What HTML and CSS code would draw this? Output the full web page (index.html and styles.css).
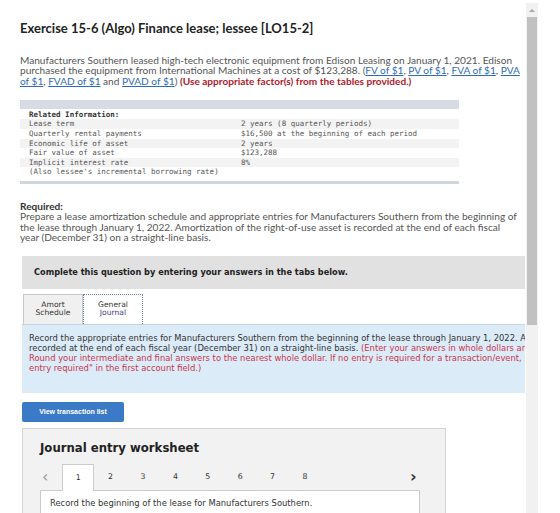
FILE: index.html
```html
<!DOCTYPE html>
<html lang="en">
<head>
    <meta charset="UTF-8">
    <meta name="viewport" content="width=device-width, initial-scale=1.0">
    <title>Exercise 15-6 (Algo) Finance lease; lessee</title>
    <link rel="stylesheet" href="styles.css">
</head>
<body>
    <div class="window">
        <div class="page">
            <h1 class="title">Exercise 15-6 (Algo) Finance lease; lessee [LO15-2]</h1>

            <p class="intro">
                Manufacturers Southern leased high-tech electronic equipment from Edison Leasing on January 1, 2021. Edison<br>
                purchased the equipment from International Machines at a cost of $123,288. (<a href="#">FV of $1</a>, <a href="#">PV of $1</a>, <a href="#">FVA of $1</a>, <a href="#">PVA</a><br>
                <a href="#">of $1</a>, <a href="#">FVAD of $1</a> and <a href="#">PVAD of $1</a>) <strong class="warn">(Use appropriate factor(s) from the tables provided.)</strong>
            </p>

            <div class="info">
                <table>
                    <tr class="info-head"><td colspan="2">Related Information:</td></tr>
                    <tr class="stripe"><td class="label">Lease term</td><td>2 years (8 quarterly periods)</td></tr>
                    <tr><td class="label">Quarterly rental payments</td><td>$16,500 at the beginning of each period</td></tr>
                    <tr class="stripe"><td class="label">Economic life of asset</td><td>2 years</td></tr>
                    <tr><td class="label">Fair value of asset</td><td>$123,288</td></tr>
                    <tr class="stripe"><td class="label">Implicit interest rate</td><td>8%</td></tr>
                    <tr><td class="label">(Also lessee's incremental borrowing rate)</td><td></td></tr>
                </table>
            </div>

            <div class="required">
                <strong>Required:</strong>
                <p>
                    Prepare a lease amortization schedule and appropriate entries for Manufacturers Southern from the beginning of<br>
                    the lease through January 1, 2022. Amortization of the right-of-use asset is recorded at the end of each fiscal<br>
                    year (December 31) on a straight-line basis.
                </p>
            </div>

            <div class="prompt">Complete this question by entering your answers in the tabs below.</div>

            <div class="tabs">
                <div class="tab">Amort<br>Schedule</div>
                <div class="tab active">General<br><span class="tab-link">Journal</span></div>
            </div>

            <div class="instructions">
                <div class="line">Record the appropriate entries for Manufacturers Southern from the beginning of the lease through January 1, 2022. Amortization of the right-of-use asset is</div>
                <div class="line">recorded at the end of each fiscal year (December 31) on a straight-line basis. <span class="note">(Enter your answers in whole dollars and not in thousands.</span></div>
                <div class="line note">Round your intermediate and final answers to the nearest whole dollar. If no entry is required for a transaction/event, select "No journal</div>
                <div class="line note">entry required" in the first account field.)</div>
            </div>

            <button class="list-btn">View transaction list</button>

            <div class="worksheet">
                <h2>Journal entry worksheet</h2>
                <div class="pager">
                    <span class="prev">&lsaquo;</span>
                    <span class="step current">1</span>
                    <span class="step">2</span>
                    <span class="step">3</span>
                    <span class="step">4</span>
                    <span class="step">5</span>
                    <span class="step">6</span>
                    <span class="step">7</span>
                    <span class="step">8</span>
                    <span class="next">&rsaquo;</span>
                </div>
                <div class="entry">Record the beginning of the lease for Manufacturers Southern.</div>
            </div>
        </div>

        <div class="scrollbar">
            <span class="scroll-up"></span>
            <div class="scroll-thumb"></div>
        </div>
    </div>
</body>
</html>
```

FILE: styles.css
```css
* {
    box-sizing: border-box;
}

body {
    margin: 0;
    background-color: #fff;
    font-family: Lato, "Open Sans", sans-serif;
}

.window {
    display: flex;
    height: 513px;
    overflow: hidden;
}

.page {
    width: 526px;
    flex-shrink: 0;
    padding: 20px 0 0 20px;
    overflow: hidden;
}

.title {
    margin: 0;
    font-size: 13px;
    line-height: 16px;
    font-weight: 700;
    color: #222;
}

.intro {
    margin: 19px 0 0;
    font-size: 10.1px;
    line-height: 10.4px;
    color: #555;
    white-space: nowrap;
}

.intro a {
    color: #2f6cb8;
}

.warn {
    color: #b0182c;
    font-weight: 700;
}

.info {
    width: 439px;
    margin-top: 13.5px;
    border-top: 9px solid #d6dbe4;
    border-bottom: 3px solid #d0d5de;
    padding: 1px 0 4px;
    font-family: "DejaVu Sans Mono", monospace;
    font-size: 7.5px;
    color: #555;
}

.info table {
    width: 100%;
    border-collapse: collapse;
}

.info td {
    height: 9.6px;
    padding: 0 0 0 9px;
    line-height: 9.6px;
    white-space: nowrap;
}

.info .label {
    width: 212px;
}

.info-head td {
    font-weight: 700;
    color: #333;
}

.stripe {
    background-color: #f3f3f3;
}

.required {
    margin-top: 17px;
    font-size: 10.1px;
    line-height: 10.4px;
    color: #333;
}

.required p {
    margin: 0;
    color: #555;
    white-space: nowrap;
}

.prompt {
    display: flex;
    align-items: center;
    width: 503px;
    height: 33px;
    margin: 13px 0 0 2px;
    padding-left: 12px;
    background-color: #e1e1e1;
    font-family: "DejaVu Sans", Verdana, sans-serif;
    font-size: 8.2px;
    font-weight: 700;
    color: #222;
}

.tabs {
    display: flex;
    margin: 5px 0 0 3px;
}

.tab {
    width: 60px;
    height: 30px;
    padding-top: 6px;
    text-align: center;
    font-family: "DejaVu Sans", Verdana, sans-serif;
    font-size: 7.6px;
    line-height: 8.8px;
    color: #333;
    background-color: #f0f0f0;
    border: 1px solid #c9c9c9;
    border-bottom: none;
}

.tab.active {
    background-color: #fff;
    border: 1px dotted #6c7fa6;
    border-bottom: none;
}

.tab-link {
    color: #3c3c7c;
}

.instructions {
    width: 503px;
    height: 69px;
    margin-left: 2px;
    padding: 8px 0 0 7px;
    overflow: hidden;
    background-color: #dcebf8;
    border-top: 1px solid #c5d3e2;
    font-family: "DejaVu Sans", Verdana, sans-serif;
    font-size: 8.4px;
    line-height: 10.2px;
    color: #333;
}

.line {
    white-space: nowrap;
}

.note {
    color: #c8364a;
}

.list-btn {
    display: block;
    width: 102px;
    height: 20px;
    margin: 9px 0 0 2px;
    padding: 0;
    border: none;
    border-radius: 2px;
    background-color: #3b7ac6;
    color: #fff;
    font-family: "Liberation Sans", Arial, sans-serif;
    font-size: 7px;
    font-weight: 700;
}

.worksheet {
    width: 424px;
    height: 120px;
    margin: 6px 0 0 2px;
    padding: 12px 25px 0 17px;
    background-color: #f2f2f2;
    border: 1px solid #d3d3d3;
}

.worksheet h2 {
    margin: 0;
    font-family: "DejaVu Sans", Verdana, sans-serif;
    font-size: 11.7px;
    line-height: 14px;
    font-weight: 700;
    color: #222;
}

.pager {
    display: flex;
    align-items: flex-end;
    height: 26px;
    margin-top: 9px;
    font-family: "DejaVu Sans", Verdana, sans-serif;
    font-size: 7.8px;
    color: #333;
}

.prev,
.next {
    display: flex;
    align-items: center;
    height: 26px;
    font-size: 16px;
}

.prev {
    width: 22px;
    padding-left: 2px;
    color: #9a9a9a;
}

.next {
    margin-left: auto;
    width: 10px;
    color: #333;
    font-weight: 700;
}

.step {
    width: 32.4px;
    height: 26px;
    line-height: 26px;
    text-align: center;
}

.step.current {
    position: relative;
    height: 27px;
    margin-bottom: -1px;
    background-color: #fff;
    border: 1px solid #ccc;
    border-bottom: none;
}

.entry {
    height: 60px;
    padding: 7px 9px;
    background-color: #fff;
    border: 1px solid #ccc;
    font-family: "DejaVu Sans", Verdana, sans-serif;
    font-size: 8.4px;
    color: #333;
}

.scrollbar {
    display: flex;
    flex-direction: column;
    align-items: center;
    width: 12px;
    margin-top: 3px;
    background-color: #f1f1f1;
}

.scroll-up {
    width: 0;
    height: 0;
    margin: 6px 0 5px;
    border-left: 3px solid transparent;
    border-right: 3px solid transparent;
    border-bottom: 3px solid #a8a8a8;
}

.scroll-thumb {
    width: 10px;
    height: 308px;
    background-color: #c1c1c1;
}
```
